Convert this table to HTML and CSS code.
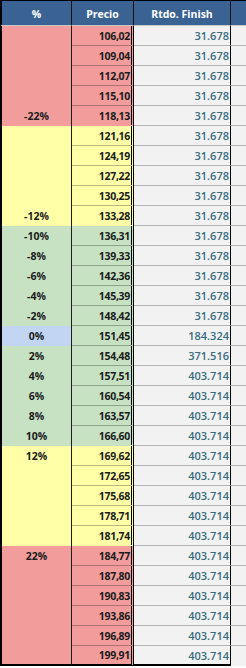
FILE: index.html
```html
<!DOCTYPE html>
<html>
<head>
<meta charset="utf-8">
<link rel="stylesheet" href="styles.css">
</head>
<body>
<div class="sheet">
  <div class="h c1">%</div>
  <div class="h c2">Precio</div>
  <div class="h c3">Rtdo. Finish</div>
  <div class="h c4"></div>

  <div class="pct red span5 bot">-22%</div>
  <div class="pr red">106,02</div><div class="rt">31.678</div><div class="ex"></div>
  <div class="pr red">109,04</div><div class="rt">31.678</div><div class="ex"></div>
  <div class="pr red">112,07</div><div class="rt">31.678</div><div class="ex"></div>
  <div class="pr red">115,10</div><div class="rt">31.678</div><div class="ex"></div>
  <div class="pr red nb">118,13</div><div class="rt">31.678</div><div class="ex"></div>

  <div class="pct yel span5 bot">-12%</div>
  <div class="pr yel">121,16</div><div class="rt">31.678</div><div class="ex"></div>
  <div class="pr yel">124,19</div><div class="rt">31.678</div><div class="ex"></div>
  <div class="pr yel">127,22</div><div class="rt">31.678</div><div class="ex"></div>
  <div class="pr yel">130,25</div><div class="rt">31.678</div><div class="ex"></div>
  <div class="pr yel nb">133,28</div><div class="rt">31.678</div><div class="ex"></div>

  <div class="pct grn">-10%</div><div class="pr grn">136,31</div><div class="rt">31.678</div><div class="ex"></div>
  <div class="pct grn">-8%</div><div class="pr grn">139,33</div><div class="rt">31.678</div><div class="ex"></div>
  <div class="pct grn">-6%</div><div class="pr grn">142,36</div><div class="rt">31.678</div><div class="ex"></div>
  <div class="pct grn">-4%</div><div class="pr grn">145,39</div><div class="rt">31.678</div><div class="ex"></div>
  <div class="pct grn">-2%</div><div class="pr grn">148,42</div><div class="rt">31.678</div><div class="ex"></div>
  <div class="pct blu">0%</div><div class="pr grn">151,45</div><div class="rt">184.324</div><div class="ex"></div>
  <div class="pct grn">2%</div><div class="pr grn">154,48</div><div class="rt">371.516</div><div class="ex"></div>
  <div class="pct grn">4%</div><div class="pr grn">157,51</div><div class="rt">403.714</div><div class="ex"></div>
  <div class="pct grn">6%</div><div class="pr grn">160,54</div><div class="rt">403.714</div><div class="ex"></div>
  <div class="pct grn">8%</div><div class="pr grn">163,57</div><div class="rt">403.714</div><div class="ex"></div>
  <div class="pct grn">10%</div><div class="pr grn nb">166,60</div><div class="rt">403.714</div><div class="ex"></div>

  <div class="pct yel span5 top">12%</div>
  <div class="pr yel">169,62</div><div class="rt">403.714</div><div class="ex"></div>
  <div class="pr yel">172,65</div><div class="rt">403.714</div><div class="ex"></div>
  <div class="pr yel">175,68</div><div class="rt">403.714</div><div class="ex"></div>
  <div class="pr yel">178,71</div><div class="rt">403.714</div><div class="ex"></div>
  <div class="pr yel nb">181,74</div><div class="rt">403.714</div><div class="ex"></div>

  <div class="pct red span6 top last">22%</div>
  <div class="pr red">184,77</div><div class="rt">403.714</div><div class="ex"></div>
  <div class="pr red">187,80</div><div class="rt">403.714</div><div class="ex"></div>
  <div class="pr red">190,83</div><div class="rt">403.714</div><div class="ex"></div>
  <div class="pr red">193,86</div><div class="rt">403.714</div><div class="ex"></div>
  <div class="pr red">196,89</div><div class="rt">403.714</div><div class="ex"></div>
  <div class="pr red last">199,91</div><div class="rt last">403.714</div><div class="ex lastex"></div>
</div>
</body>
</html>
```
FILE: styles.css
```css
* { box-sizing: border-box; }
html, body { margin: 0; padding: 0; background: #ffffff; }
body { font-family: "Open Sans", "Liberation Sans", sans-serif; }

.sheet {
  display: grid;
  grid-template-columns: 72px 62px 97px 15px;
  grid-template-rows: 26px repeat(32, 20px);
  width: 246px;
}

.h {
  background: #3a6393;
  color: #ffffff;
  font-weight: 700;
  font-size: 10.5px;
  border-top: 1px solid #000;
  border-bottom: 1px solid #c8c8c8;
  border-right: 1px solid #111;
  display: flex;
  align-items: center;
  justify-content: center;
  padding-top: 2px;
}
.h.c1 { border-left: 2px solid #000; }
.h.c4 { border-right: none; }

.pct {
  grid-column: 1;
  border-left: 2px solid #000;
  border-right: 1px solid #1e1e1e;
  font-weight: 700;
  font-size: 10.5px;
  color: #1c1c1c;
  display: flex;
  justify-content: center;
  align-items: center;
}
.pct.span5 { grid-row: span 5; }
.pct.span6 { grid-row: span 6; }
.pct.bot { align-items: flex-end; padding-bottom: 3px; }
.pct.top { align-items: flex-start; padding-top: 3px; }

.pr {
  grid-column: 2;
  border-right: 3px double #000;
  border-bottom: 1px solid rgba(0, 0, 0, 0.28);
  font-weight: 700;
  font-size: 10.5px;
  letter-spacing: -0.3px;
  color: #1c1c1c;
  display: flex;
  align-items: center;
  justify-content: flex-end;
  padding-right: 1px;
}
.pr.nb { border-bottom-color: transparent; }

.rt {
  grid-column: 3;
  background: #f2f2f2;
  border-right: 1px solid #000;
  border-bottom: 1px solid #b4b4b4;
  font-weight: 600;
  font-size: 11px;
  color: #386c7e;
  display: flex;
  align-items: center;
  justify-content: flex-end;
  padding-right: 1px;
}

.ex {
  grid-column: 4;
  background: #f2f2f2;
  border-bottom: 1px solid #b4b4b4;
}

.red { background: #f29c9c; }
.yel { background: #ffffa8; }
.grn { background: #c6e2c3; }
.blu { background: #c2d6f4; }

.last { border-bottom: 2px solid #000; }
.ex.lastex { border-bottom: none; }
```
